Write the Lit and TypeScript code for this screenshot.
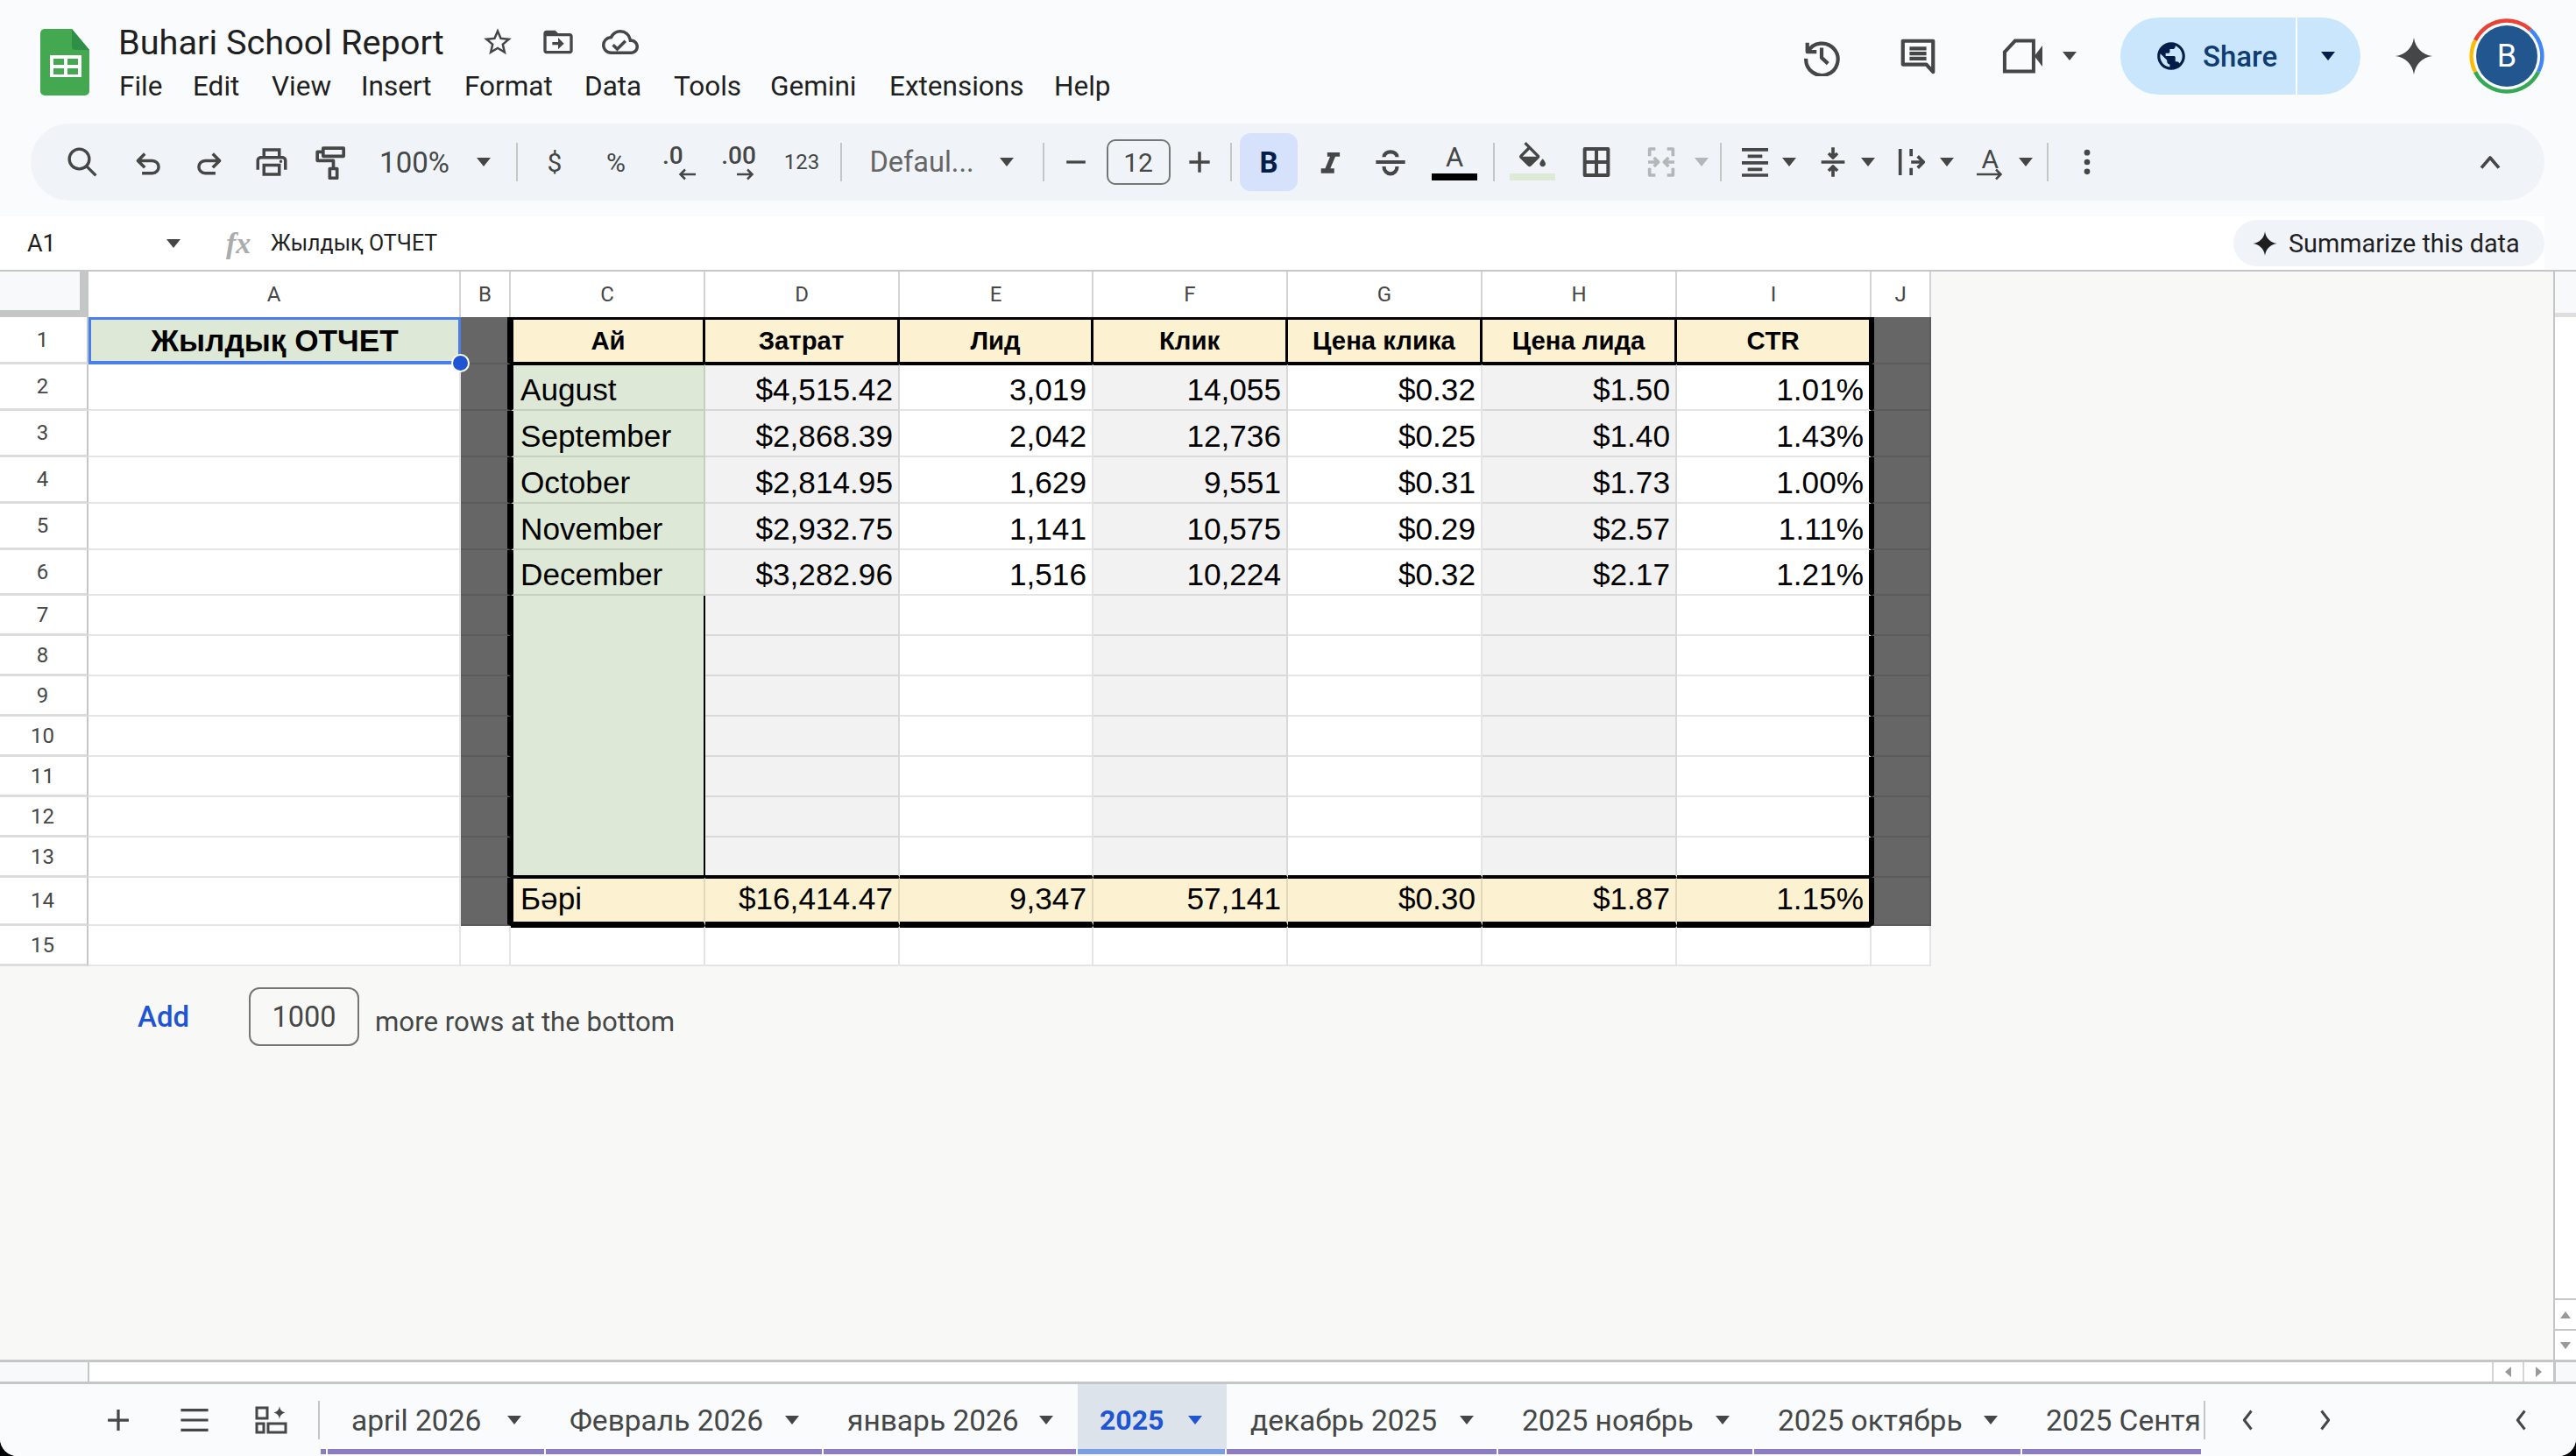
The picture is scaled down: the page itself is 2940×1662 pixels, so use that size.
import { LitElement, html, css, TemplateResult } from 'lit';
import { customElement } from 'lit/decorators.js';

const ink = '#444746';

// center-positioned slots, laid out by flow with margins derived from the data
type Item = { c: number; w: number; t: unknown };
const run = (base: number, items: Item[]) => {
  let x = base;
  return items.map((it) => {
    const ml = it.c - it.w / 2 - x;
    x = it.c + it.w / 2;
    return html`<div class="slot" style="margin-left:${ml}px;width:${it.w}px">${it.t}</div>`;
  });
};

const fillIcon = (d: string, size = 40, color = ink) => html`<svg width=${size} height=${size} viewBox="0 0 24 24" fill=${color}><path d=${d}></path></svg>`;
const strokeIcon = (d: string, size = 40, color = ink, sw = 2.2) => html`<svg width=${size} height=${size} viewBox="0 0 24 24" fill="none" stroke=${color} stroke-width=${sw} stroke-linejoin="round"><path d=${d}></path></svg>`;

const caret = (cls = '') => html`<span class="caret ${cls}"></span>`;
const sep = html`<span class="sep"></span>`;

const P = {
  print: 'M19 8h-1V3H6v5H5c-1.66 0-3 1.34-3 3v6h4v4h12v-4h4v-6c0-1.66-1.34-3-3-3zM8 5h8v3H8V5zm8 14H8v-4h8v4zm2-2v-4H6v4H4v-6c0-.55.45-1 1-1h14c.55 0 1 .45 1 1v6h-2zM18 10.500a1 1 0 1 1 0 2 1 1 0 0 1 0-2z',
  star: 'M22 9.24l-7.19-.62L12 2 9.19 8.63 2 9.24l5.46 4.73L5.82 21 12 17.27 18.18 21l-1.63-7.03L22 9.24zM12 15.4l-3.76 2.27 1-4.28-3.32-2.88 4.38-.38L12 6.1l1.71 4.04 4.38.38-3.32 2.88 1 4.28L12 15.4z',
  folder: 'M20 6h-8l-2-2H4c-1.1 0-2 .9-2 2v12c0 1.1.9 2 2 2h16c1.1 0 2-.9 2-2V8c0-1.1-.9-2-2-2zm0 12H4V8h16v10zm-8-1l4-4-4-4v3H8v2h4v3z',
  cloud: 'M19.35 10.04A7.49 7.49 0 0 0 12 4C9.11 4 6.6 5.64 5.35 8.04A5.994 5.994 0 0 0 0 14c0 3.31 2.69 6 6 6h13c2.76 0 5-2.24 5-5 0-2.64-2.05-4.78-4.65-4.96zM19 18H6c-2.21 0-4-1.79-4-4 0-2.05 1.53-3.76 3.56-3.97l1.07-.11.5-.95A5.469 5.469 0 0 1 12 6c2.62 0 4.88 1.86 5.39 4.43l.3 1.5 1.53.11A2.98 2.98 0 0 1 22 15c0 1.65-1.35 3-3 3zm-9-2.82l-2.09-2.09L6.5 14.5 10 18l6.01-6.01-1.41-1.41z',
  globe: 'M12 2C6.48 2 2 6.48 2 12s4.48 10 10 10 10-4.48 10-10S17.52 2 12 2zm-1 17.93c-3.95-.49-7-3.85-7-7.93 0-.62.08-1.21.21-1.79L9 15v1c0 1.1.9 2 2 2v1.93zm6.9-2.54c-.26-.81-1-1.39-1.9-1.39h-1v-3c0-.55-.45-1-1-1H8v-2h2c.55 0 1-.45 1-1V7h2c1.1 0 2-.9 2-2v-.41c2.93 1.19 5 4.06 5 7.41 0 2.08-.8 3.97-2.1 5.39z',
  spark: 'M12 1C12.8 7 17 11.2 23 12 17 12.8 12.8 17 12 23 11.2 17 7 12.8 1 12 7 11.2 11.2 7 12 1z',
  italic: 'M10 5h9v3h-3.200l-3.600 8.500H15V20H5.500v-3.500h3L12 8H10z',
  fill: 'M16.56 8.94L7.62 0 6.21 1.41l2.38 2.38-5.15 5.15a1.49 1.49 0 0 0 0 2.12l5.5 5.5c.29.29.68.44 1.06.44s.77-.15 1.06-.44l5.5-5.500c.59-.58.59-1.53 0-2.12zM5.21 10L10 5.21 14.79 10H5.21zM19 11.5s-2 2.17-2 3.5c0 1.1.9 2 2 2s2-.9 2-2c0-1.33-2-3.5-2-3.5z',
};

const search = strokeIcon('M10 3.500a6.500 6.500 0 1 0 0 13 6.500 6.500 0 0 0 0-13zM14.800 14.800l6 6', 42, ink, 1.9);
const undo = strokeIcon('M9 6l-5 5 5 5M4 11h10.500a4.500 4.500 0 0 1 0 9H7', 38);
const redo = strokeIcon('M15 6l5 5-5 5M20 11H9.500a4.500 4.500 0 0 0 0 9H17', 38);
const roller = strokeIcon('M6.500 2.500h14v5.500h-14zM6.500 5H2.500v6h11v5.500M11 16.500h5v6.500h-5z', 40);
const strike = strokeIcon('M2 12h20M7.500 8.500C7.500 6.500 9.500 5 12 5s4.500 1.500 4.500 3.500M7.500 15c0 3 2 5 4.500 5s4.500-2 4.500-5', 40, ink, 2.500);
const borders = strokeIcon('M4 3h16v18H4zM12 3v18M4 12h16', 40, ink, 2.400);
const merge = strokeIcon('M8 3H4v5M16 3h4v5M8 21H4v-5M16 21h4v-5M3 12h7M7 9l3 3-3 3M21 12h-7M17 9l-3 3 3 3', 40, '#b4b7b9');
const align = strokeIcon('M3 3.500h18M7 8h10M3 12.500h18M7 17h10M3 21h18', 40, ink, 2.200);
const valign = strokeIcon('M12 2v6.500M9 6l3 3 3-3M4 12h16M12 22v-6.500M9 18l3-3 3 3', 40);
const wrap = strokeIcon('M4 3v18M11.500 3v5M11.500 16v5M11.500 12H20M16 8l4 4-4 4', 40);
const more = html`<svg width="40" height="40" viewBox="0 0 24 24" fill=${ink}><circle cx="12" cy="5.500" r="2"></circle><circle cx="12" cy="12" r="2"></circle><circle cx="12" cy="18.500" r="2"></circle></svg>`;
const chevUp = strokeIcon('M6 16l6-7 6 7', 40);
const arrowLine = (left: boolean, w = 20) => html`<svg width=${w} height="14" viewBox="0 0 ${w} 14" fill="none" stroke=${ink} stroke-width="2.500"><path d=${left ? `M${w} 7H3M8 1.500L2.500 7 8 12.500` : `M0 7h${w - 3}M${w - 8} 1.500L${w - 2.5} 7 ${w - 8} 12.500`}></path></svg>`;

const toolbarItems: Item[] = [
  { c: 94, w: 44, t: search },
  { c: 170, w: 40, t: undo },
  { c: 238, w: 40, t: redo },
  { c: 310, w: 44, t: fillIcon(P.print, 42) },
  { c: 378, w: 40, t: roller },
  { c: 473, w: 100, t: html`<span class="tt zoom">100%</span>` },
  { c: 552, w: 18, t: caret() },
  { c: 590, w: 2, t: sep },
  { c: 633, w: 40, t: html`<span class="tt sym">$</span>` },
  { c: 703, w: 40, t: html`<span class="tt sym">%</span>` },
  { c: 775, w: 44, t: html`<span class="dec"><span>.0</span><span class="ar-r">${arrowLine(true)}</span></span>` },
  { c: 843, w: 48, t: html`<span class="dec"><span>.00</span><span class="ar-r">${arrowLine(false)}</span></span>` },
  { c: 915, w: 48, t: html`<span class="tt n123">123</span>` },
  { c: 960, w: 2, t: sep },
  { c: 1052, w: 122, t: html`<span class="tt font-name">Defaul...</span>` },
  { c: 1149, w: 18, t: caret() },
  { c: 1191, w: 2, t: sep },
  { c: 1228, w: 26, t: strokeIcon('M2 12h20', 28, ink, 3) },
  { c: 1299, w: 73, t: html`<span class="size">12</span>` },
  { c: 1369, w: 30, t: strokeIcon('M12 2v20M2 12h20', 28, ink, 3) },
  { c: 1405, w: 2, t: sep },
  { c: 1448, w: 66, t: html`<span class="bold">B</span>` },
  { c: 1518, w: 40, t: fillIcon(P.italic, 38) },
  { c: 1587, w: 40, t: strike },
  { c: 1660, w: 52, t: html`<span class="colored"><span class="tt letter">A</span><span class="swatch"></span></span>` },
  { c: 1705, w: 2, t: sep },
  { c: 1749, w: 52, t: html`<span class="colored"><span class="bucket">${fillIcon(P.fill, 40)}</span><span class="swatch green"></span></span>` },
  { c: 1822, w: 40, t: borders },
  { c: 1896, w: 40, t: merge },
  { c: 1942, w: 18, t: caret('off') },
  { c: 1964, w: 2, t: sep },
  { c: 2003, w: 40, t: align },
  { c: 2042, w: 18, t: caret() },
  { c: 2092, w: 40, t: valign },
  { c: 2132, w: 18, t: caret() },
  { c: 2182, w: 40, t: wrap },
  { c: 2222, w: 18, t: caret() },
  { c: 2272, w: 40, t: html`<span class="rot"><span class="tt rot-a">A</span><span class="rot-ar">${arrowLine(false, 30)}</span></span>` },
  { c: 2312, w: 18, t: caret() },
  { c: 2337, w: 2, t: sep },
  { c: 2382, w: 40, t: more },
  { c: 2842, w: 40, t: chevUp },
];

const menus: [string, number][] = [
  ['File', 84], ['Edit', 90], ['View', 102], ['Insert', 118], ['Format', 137],
  ['Data', 102], ['Tools', 110], ['Gemini', 136], ['Extensions', 188], ['Help', 80],
];

const history = strokeIcon('M3.500 4v5.500H9M3.800 9.500A9.500 9.500 0 1 1 2.700 13.500M12 7v6l3.800 3.500', 46, ink, 2.2);
const comment = strokeIcon('M3 3h18v18.500L17 17H3zM7 7.500h10M7 10.500h10M7 13.500h10', 46, ink, 2.2);
const meet = html`<svg width="48" height="44" viewBox="0 0 26 24" fill="none" stroke=${ink} stroke-width="2.200"><path d="M8 2.500h11.500v19H1.500V9.500z"></path><path d="M20 12l5-6.500v13z" fill=${ink} stroke="none"></path></svg>`;

const avatar = html`<svg width="88" height="88" viewBox="0 0 88 88" fill="none" stroke-width="4.500">
  <path d="M8 26A40 40 0 0 1 71 14" stroke="#ea4335"></path>
  <path d="M71 14A40 40 0 0 1 80 62" stroke="#4285f4"></path>
  <path d="M80 62A40 40 0 0 1 8 62" stroke="#34a853"></path>
  <path d="M8 62A40 40 0 0 1 8 26" stroke="#fbbc04"></path>
  <circle cx="44" cy="44" r="35" fill="#22568f" stroke="none"></circle>
</svg>`;

const sheetsLogo = html`<svg width="56" height="76" viewBox="0 0 56 76">
  <path d="M5 0h31l20 24v47a5 5 0 0 1-5 5H5a5 5 0 0 1-5-5V5a5 5 0 0 1 5-5z" fill="#43a850"></path>
  <path d="M36 0v20a4 4 0 0 0 4 4h16z" fill="#2f8f46"></path>
  <path d="M11 30h36v25H11z" fill="#fff"></path>
  <path d="M15 34h12v7H15zM31 34h12v7H31zM15 45h12v7H15zM31 45h12v7H31z" fill="#43a850"></path>
</svg>`;

const explorer = html`<svg width="38" height="32" viewBox="0 0 38 32" fill="none" stroke=${ink} stroke-width="3">
  <path d="M2 2h12v12H2zM2 20h8v10H2zM15 20h20v10H15z"></path>
  <path d="M28 0c.6 4.500 2.500 6.500 6.500 7.500C30.500 8.500 28.600 10.500 28 15c-.6-4.500-2.500-6.500-6.500-7.500C25.500 6.500 27.400 4.500 28 0z" fill=${ink} stroke="none"></path>
</svg>`;

const columns = ['A', 'B', 'C', 'D', 'E', 'F', 'G', 'H', 'I', 'J'];
const colWidths = [101, 425, 57, 222, 222, 221, 222, 222, 222, 222, 68];
const rowHeights = [52, 54, 53, 53, 53, 53, 52, 46, 46, 46, 46, 46, 46, 46, 55, 46];

const headRow = ['Ай', 'Затрат', 'Лид', 'Клик', 'Цена клика', 'Цена лида', 'CTR'];
const dataRows: string[][] = [
  ['August', '$4,515.42', '3,019', '14,055', '$0.32', '$1.50', '1.01%'],
  ['September', '$2,868.39', '2,042', '12,736', '$0.25', '$1.40', '1.43%'],
  ['October', '$2,814.95', '1,629', '9,551', '$0.31', '$1.73', '1.00%'],
  ['November', '$2,932.75', '1,141', '10,575', '$0.29', '$2.57', '1.11%'],
  ['December', '$3,282.96', '1,516', '10,224', '$0.32', '$2.17', '1.21%'],
];
const totalRow = ['Бәрі', '$16,414.47', '9,347', '57,141', '$0.30', '$1.87', '1.15%'];

const tabs: [string, number, boolean][] = [
  ['april 2026', 249, false], ['Февраль 2026', 317, false], ['январь 2026', 290, false],
  ['2025', 170, true], ['декабрь 2025', 310, false], ['2025 ноябрь', 292, false], ['2025 октябрь', 306, false],
];

@customElement('app-root')
export class AppRoot extends LitElement {
  static styles = css`
    :host {
      display: block;
      width: 100vw;
      height: 100vh;
      background: #000;
      font-family: Roboto, "Noto Sans", sans-serif;
      overflow: hidden;
    }
    .window {
      height: 100%;
      display: flex;
      flex-direction: column;
      background: #f9fbfd;
      border-radius: 0 0 20px 20px;
      overflow: hidden;
    }
    .slot { display: flex; align-items: center; justify-content: center; flex: none; }
    .tt { color: #444746; white-space: nowrap; }

    .header { height: 247px; flex: none; box-sizing: border-box; }
    .top { height: 141px; display: flex; }
    .logo { margin: 33px 33px 0 46px; flex: none; height: 76px; }
    .titleblock { padding-top: 23px; }
    .titlerow { display: flex; height: 50px; align-items: center; }
    .title { width: 372px; font-size: 39.700px; color: #1f1f1f; white-space: nowrap; flex: none; }
    .menu { display: flex; height: 50px; align-items: center; padding-left: 1px; }
    .menu span { font-size: 31.500px; color: #1f1f1f; flex: none; }
    .actions { margin-left: auto; width: 855px; height: 128px; display: flex; align-items: center; flex: none; margin-right: 35px; }
    .share { display: flex; height: 88px; color: #0f3d73; }
    .share-main {
      width: 200px; background: #c9e6fd; border-radius: 44px 0 0 44px;
      display: flex; align-items: center; padding-left: 39px; box-sizing: border-box; gap: 17px;
      font-size: 33px; font-weight: 500;
    }
    .share-drop {
      width: 74px; background: #c9e6fd; border-radius: 0 44px 44px 0; border-left: 2px solid #fff; box-sizing: border-box;
      display: flex; align-items: center; justify-content: center; padding-right: 2px;
    }
    .avatar { position: relative; width: 88px; height: 88px; }
    .avatar span { position: absolute; inset: 0; display: flex; align-items: center; justify-content: center; color: #fff; font-size: 36px; }

    .caret { width: 0; height: 0; border-left: 8px solid transparent; border-right: 8px solid transparent; border-top: 10px solid #444746; display: block; flex: none; }
    .caret.off { border-top-color: #b4b7b9; }
    .caret.navy { border-top-color: #041e49; }
    .caret.blue { border-top-color: #1f55d0; }
    .sep { width: 2px; height: 44px; background: #c4c7c5; display: block; }

    .toolbar {
      margin: 0 36px 0 35px;
      height: 88px;
      background: #f0f4f9;
      border-radius: 44px;
      display: flex;
      align-items: center;
    }
    .zoom { font-size: 33px; }
    .sym { font-size: 30px; }
    .n123 { font-size: 24px; }
    .dec { display: flex; flex-direction: column; align-items: flex-start; font-size: 28px; color: #444746; line-height: 28px; font-weight: 500; }
    .ar-r { margin-left: 18px; height: 14px; display: block; line-height: 0; }
    .font-name { font-size: 32.500px; color: #666; }
    .size {
      width: 73px; height: 52px; box-sizing: border-box; border: 2px solid #747775; border-radius: 10px;
      display: flex; align-items: center; justify-content: center; font-size: 30px; color: #444746;
    }
    .bold {
      width: 66px; height: 66px; border-radius: 12px; background: #d6e2fb; color: #041e49;
      display: flex; align-items: center; justify-content: center; font-size: 33px; font-weight: 700;
    }
    .colored { display: flex; flex-direction: column; align-items: center; height: 52px; margin-bottom: 10px; justify-content: space-between; }
    .letter { font-size: 31px; line-height: 34px; margin-top: 9px; }
    .bucket { height: 36px; margin-top: 8px; line-height: 0; display: block; }
    .swatch { width: 52px; height: 8px; background: #000; display: block; flex: none; }
    .swatch.green { background: #deead6; }
    .rot { display: flex; flex-direction: column; align-items: flex-start; line-height: 0; }
    .rot-a { font-size: 30px; line-height: 34px; margin-left: 3px; }
    .rot-ar { margin-top: -7px; height: 14px; margin-left: -3px; display: block; }

    .formula {
      height: 61px; flex: none; background: #fff; display: flex; align-items: center;
      margin-right: 36px; position: relative;
    }
    .namebox { width: 159px; padding-left: 31px; font-size: 27px; color: #1f1f1f; box-sizing: content-box; flex: none; }
    .fx { margin-left: 52px; width: 51px; font: italic 700 34px "Liberation Serif", serif; color: #a9acad; flex: none; }
    .ftext { font-size: 25px; color: #1f1f1f; flex: 1; }
    .chip {
      width: 355px; height: 53px; background: #f0f4f9; border-radius: 27px; box-sizing: border-box;
      display: flex; align-items: center; padding-left: 21px; gap: 12px; font-size: 28.800px; color: #1f1f1f; flex: none;
    }

    .body { flex: 1; display: flex; min-height: 0; background: #f8f9f6; border-top: 2px solid #c4c7c5; }
    .sheet { flex: 1; min-width: 0; }
    .grid { display: grid; width: max-content; }
    .cell {
      box-sizing: border-box; border-right: 2px solid rgba(0, 0, 0, .1); border-bottom: 2px solid rgba(0, 0, 0, .1);
      background: #fff; display: flex; align-items: flex-end; font: 35.200px "Liberation Sans", Arial, sans-serif; color: #000;
      overflow: hidden; white-space: nowrap; padding: 0 6px 2px 8px; position: relative;
    }
    .cell.num { justify-content: flex-end; }
    .corner { background: #f8f9fa; border-right: 10px solid #c4c7c5; border-bottom: 8px solid #c4c7c5; padding: 0; }
    .ch, .rh {
      font: 24px Roboto, sans-serif; color: #444746; align-items: center; justify-content: center; padding: 0;
    }
    .ch { border-right: 2px solid #d4d4d4; border-bottom: 0; }
    .rh { border-right: 2px solid #c4c7c5; border-bottom: 3px solid #dcdcdc; padding-right: 2px; }
    .dark { background: #666; }
    .bdr-fr { border-right: 4px solid #000; }
    .bdl-fr { border-left: 3px solid #000; }
    .hd {
      background: #fcf1d0; font-size: 29.300px; font-weight: 700; justify-content: center; align-items: center;
      border-top: 3px solid #000; border-bottom: 3px solid #000; border-right: 3px solid #000; padding: 0;
    }
    .green { background: #dde9d6; }
    .alt { background: #f2f2f2; }
    .beige { background: #fcf1d0; padding-bottom: 6px; }
    .top-1 { border-top: 1px solid #000; }
    .bot-3 { border-bottom: 3px solid #000; }
    .bot-5 { border-bottom: 5px solid #000; }
    .top-2 { border-top: 2px solid #000; }
    .rgt-2 { border-right: 2px solid #000; }
    .rgt-3 { border-right: 3px solid #000; }
    .plain-b { border-bottom: 0; }
    .a1 {
      background: #dde9d6; border: 3px solid #4a7ee8; border-bottom-width: 4px; font-weight: 700;
      justify-content: center; align-items: center; padding: 0; overflow: visible; z-index: 2;
    }
    .handle {
      position: absolute; right: -13px; bottom: -13px; width: 17px; height: 17px; border-radius: 50%;
      background: #1f55d0; border: 2px solid #fff;
    }

    .addrow { display: flex; align-items: flex-start; margin-top: 24px; height: 67px; }
    .add { margin-left: 157px; width: 127px; font-size: 33px; font-weight: 500; color: #1f55d0; line-height: 67px; flex: none; }
    .addinput {
      width: 126px; height: 67px; box-sizing: border-box; border: 2px solid #747775; border-radius: 12px; flex: none;
      display: flex; align-items: center; justify-content: center; font-size: 32.500px; color: #444746;
    }
    .addtext { margin: 20px 0 0 18px; font-size: 31.200px; color: #444746; line-height: 40px; }

    .vscroll { width: 26px; flex: none; border-left: 2px solid #c4c7c5; background: #fff; display: flex; flex-direction: column; box-sizing: border-box; }
    .vhead { background: #f8f9fa; border-bottom: 5px solid #dedede; flex: none; height: 47px; }
    .vspace { flex: 1; }
    .vbtn { height: 35px; flex: none; border-top: 2px solid #c4c7c5; display: flex; align-items: center; justify-content: center; box-sizing: border-box; }
    .tri-u, .tri-d { width: 0; height: 0; border-left: 6px solid transparent; border-right: 6px solid transparent; }
    .tri-u { border-bottom: 8px solid #999; }
    .tri-d { border-top: 8px solid #999; }
    .tri-l, .tri-r { width: 0; height: 0; border-top: 6px solid transparent; border-bottom: 6px solid transparent; }
    .tri-l { border-right: 7px solid #999; }
    .tri-r { border-left: 7px solid #999; }

    .hscroll {
      height: 28px; flex: none; box-sizing: border-box; background: #fff; display: flex; border-top: 3px solid #c4c7c5; border-bottom: 3px solid #c4c7c5;
    }
    .hleft { width: 102px; background: #f8f9fa; border-right: 2px solid #c4c7c5; box-sizing: border-box; flex: none; }
    .hspace { flex: 1; }
    .hbtn { width: 35px; border-left: 2px solid #d4d4d4; display: flex; align-items: center; justify-content: center; box-sizing: border-box; flex: none; }
    .hend { width: 26px; background: #f8f9fa; border-left: 3px solid #c4c7c5; box-sizing: border-box; flex: none; }

    .tabs { height: 82px; flex: none; display: flex; background: #f9fbfd; }
    .tabctl { display: flex; align-items: center; height: 82px; flex: none; width: 374px; position: relative; }
    .tabctl::after { content: ""; position: absolute; right: 2px; bottom: 2px; width: 6px; height: 6px; background: #8e7cc3; }
    .tab {
      box-sizing: border-box; height: 80px; flex: none; display: flex; align-items: center; position: relative;
      padding: 2px 28px 0 27px; font-size: 33.500px; color: #444746; white-space: nowrap; justify-content: space-between;
    }
    .tab::after { content: ""; position: absolute; left: 0; right: 0; bottom: 0; height: 6px; background: #8e7cc3; border-right: 2px solid #f9fbfd; }
    .tab.active { background: #dde3ea; color: #1f55d0; font-weight: 700; padding-left: 25px; font-size: 32px; }
    .tab.active::after { background: #7a9de3; }
    .tab.clip { width: 204px; padding-right: 0; overflow: hidden; justify-content: flex-start; }
    .tab.clip::after { border: 0; }
    .tabnav { display: flex; align-items: center; height: 82px; flex: 1; box-sizing: border-box; }
  `;

  private cell(col: number, row: number): TemplateResult {
    const inTable = col >= 2 && col <= 8;
    if (col === 0 && row === 1) {
      return html`<div class="cell a1">Жылдық ОТЧЕТ<span class="handle"></span></div>`;
    }
    const cls: string[] = ['cell'];
    let text = '';
    if ((col === 1 || col === 9) && row <= 14) {
      cls.push('dark');
      cls.push(col === 1 ? 'bdr-fr' : 'bdl-fr');
    }
    if (inTable && row === 1) {
      cls.push('hd');
      if (col === 2) cls.push('bdl-fr');
      text = headRow[col - 2];
    } else if (inTable && row <= 14) {
      if (col === 2) cls.push('bdl-fr');
      if (col === 8) cls.push('rgt-3');
      if (row === 14) {
        cls.push('beige', 'top-1', 'bot-5');
        text = totalRow[col - 2];
      } else {
        if (col === 2) cls.push('green');
        else if (col % 2 === 1) cls.push('alt');
        if (row === 2) cls.push('top-1');
        if (row === 13) cls.push('bot-3');
        if (col === 2 && row >= 7) cls.push('rgt-2');
        if (col === 2 && row >= 7 && row < 13) cls.push('plain-b');
        if (row <= 6) text = dataRows[row - 2][col - 2];
      }
      if (col > 2) cls.push('num');
    } else if (inTable && row === 15) {
      cls.push('top-2');
    }
    return html`<div class=${cls.join(' ')}>${text}</div>`;
  }

  render() {
    const rows = Array.from({ length: 15 }, (_, i) => i + 1);
    return html`
      <div class="window">
        <div class="header">
          <div class="top">
            <div class="logo">${sheetsLogo}</div>
            <div class="titleblock">
              <div class="titlerow">
                <span class="title">Buhari School Report</span>
                ${run(507, [
                  { c: 568, w: 40, t: fillIcon(P.star, 38) },
                  { c: 637, w: 40, t: fillIcon(P.folder, 40) },
                  { c: 708, w: 42, t: fillIcon(P.cloud, 42) },
                ])}
              </div>
              <div class="menu">
                ${menus.map(([m, w]) => html`<span style="width:${w}px">${m}</span>`)}
              </div>
            </div>
            <div class="actions">
              ${run(2050, [
                { c: 2079, w: 46, t: history },
                { c: 2189, w: 46, t: comment },
                { c: 2309, w: 48, t: meet },
                { c: 2362, w: 18, t: caret() },
                { c: 2557, w: 274, t: html`<div class="share">
                  <div class="share-main">${fillIcon(P.globe, 38, '#041e49')}<span>Share</span></div>
                  <div class="share-drop">${caret('navy')}</div>
                </div>` },
                { c: 2755, w: 46, t: fillIcon(P.spark, 46) },
                { c: 2861, w: 88, t: html`<div class="avatar">${avatar}<span>B</span></div>` },
              ])}
            </div>
          </div>
          <div class="toolbar">${run(35, toolbarItems)}</div>
        </div>

        <div class="formula">
          <span class="namebox">A1</span>
          ${caret()}
          <span class="fx">fx</span>
          <span class="ftext">Жылдық ОТЧЕТ</span>
          <div class="chip">${fillIcon(P.spark, 30, '#1f1f1f')}<span>Summarize this data</span></div>
        </div>

        <div class="body">
          <div class="sheet">
            <div class="grid" style="grid-template-columns:${colWidths.map((w) => w + 'px').join(' ')};grid-template-rows:${rowHeights.map((h) => h + 'px').join(' ')}">
              <div class="cell corner"></div>
              ${columns.map((c) => html`<div class="cell ch">${c}</div>`)}
              ${rows.map((r) => html`
                <div class="cell rh">${r}</div>
                ${columns.map((_, c) => this.cell(c, r))}
              `)}
            </div>
            <div class="addrow">
              <span class="add">Add</span>
              <span class="addinput">1000</span>
              <span class="addtext">more rows at the bottom</span>
            </div>
          </div>
          <div class="vscroll">
            <div class="vhead"></div>
            <div class="vspace"></div>
            <div class="vbtn"><span class="tri-u"></span></div>
            <div class="vbtn"><span class="tri-d"></span></div>
          </div>
        </div>

        <div class="hscroll">
          <div class="hleft"></div>
          <div class="hspace"></div>
          <div class="hbtn"><span class="tri-l"></span></div>
          <div class="hbtn"><span class="tri-r"></span></div>
          <div class="hend"></div>
        </div>

        <div class="tabs">
          <div class="tabctl">
            ${run(0, [
              { c: 135, w: 26, t: strokeIcon('M12 1v22M1 12h22', 26, ink, 3) },
              { c: 222, w: 34, t: strokeIcon('M1 4h22M1 12h22M1 20h22', 34, ink, 2.200) },
              { c: 310, w: 38, t: explorer },
              { c: 363.500, w: 2, t: sep },
            ])}
          </div>
          ${tabs.map(([name, w, active]) => html`<div class="tab ${active ? 'active' : ''}" style="width:${w}px"><span>${name}</span>${caret(active ? 'blue' : '')}</div>`)}
          <div class="tab clip"><span>2025 Сентя</span></div>
          <div class="tabnav">
            ${run(2512, [
              { c: 2516, w: 2, t: sep },
              { c: 2566, w: 28, t: strokeIcon('M15 3l-7 9 7 9', 28, ink, 2.600) },
              { c: 2653, w: 28, t: strokeIcon('M9 3l7 9-7 9', 28, ink, 2.600) },
              { c: 2878, w: 28, t: strokeIcon('M15 3l-7 9 7 9', 28, ink, 2.600) },
            ])}
          </div>
        </div>
      </div>
    `;
  }
}
